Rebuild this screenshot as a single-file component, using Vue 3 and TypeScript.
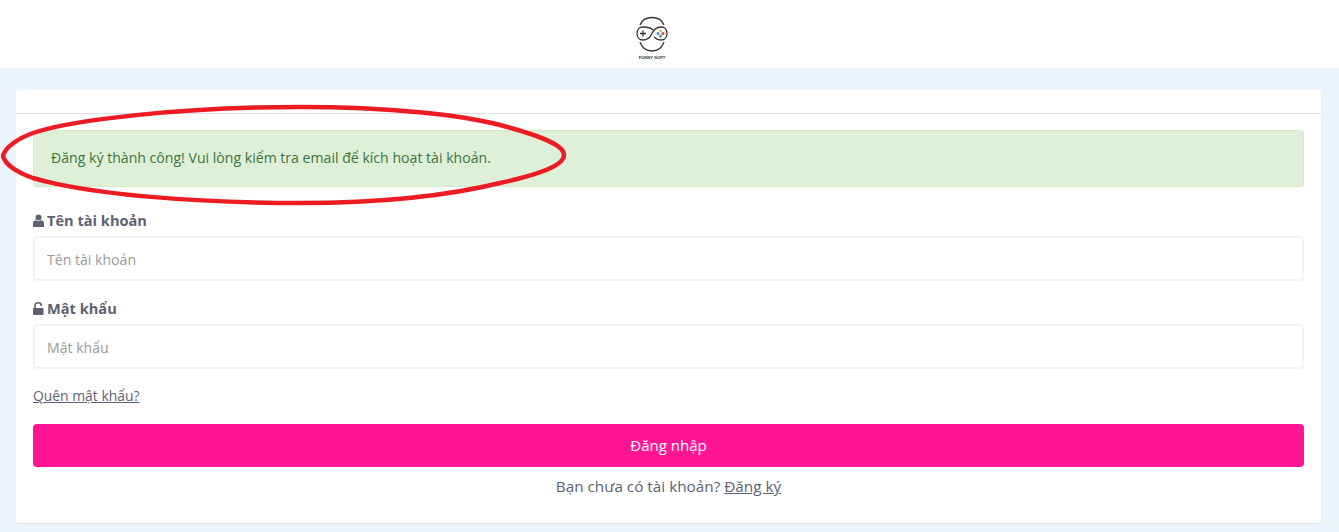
<template>
  <div class="page">
    <header class="top">
      <svg class="logo" width="36" height="46" viewBox="0 0 36 46" fill="none">
        <path d="M6 11 C10 1 26 1 30 11" stroke="#333" stroke-width="1.300" />
        <path d="M6 28 C10 40 26 40 30 28" stroke="#333" stroke-width="1.300" />
        <path d="M19 16 C17 14 14 13 9 13 C5 13 3 16 3 19.500 C3 23 5 26 9 26 C13 26 16 24 18 19.500 C20 15 23 13 27 13 C31 13 33 16 33 19.500 C33 23 31 26 27 26 C24 26 22 25 20 23" stroke="#333" stroke-width="1.300" />
        <path d="M6 19.500 H12 M9 16.500 V22.500" stroke="#333" stroke-width="1.300" />
        <circle cx="26.500" cy="17" r="1.500" fill="#e8b730" />
        <circle cx="24" cy="19.500" r="1.500" fill="#3f8fd8" />
        <circle cx="29" cy="19.500" r="1.500" fill="#d8453f" />
        <circle cx="26.500" cy="22" r="1.500" fill="#4dab55" />
        <text x="18" y="45" class="logo-text" text-anchor="middle">FUNNY SOFT</text>
      </svg>
    </header>

    <main class="content">
      <section class="card">
        <div class="card-head"></div>
        <form class="card-body" @submit.prevent>
          <div class="alert">Đăng ký thành công! Vui lòng kiểm tra email để kích hoạt tài khoản.</div>

          <div class="field">
            <label class="label">
              <svg class="ico" width="11" height="13" viewBox="0 0 11 13">
                <circle cx="5.500" cy="3.400" r="3" fill="#5c6273" />
                <path d="M0 13 V9.500 C0 7.500 1.500 6.300 3 6.300 C4.500 7.500 6.500 7.500 8 6.300 C9.500 6.300 11 7.500 11 9.500 V13 Z" fill="#5c6273" />
              </svg>
              Tên tài khoản
            </label>
            <input class="input" type="text" placeholder="Tên tài khoản" />
          </div>

          <div class="field">
            <label class="label">
              <svg class="ico" width="11" height="13" viewBox="0 0 11 13">
                <path d="M2 6 V3.600 C2 1.800 3.400 0.800 5.200 0.800 C7 0.800 8.300 1.800 8.300 3.400 V4" fill="none" stroke="#5c6273" stroke-width="1.600" />
                <rect x="0" y="6" width="10.500" height="7" rx="1" fill="#5c6273" />
              </svg>
              Mật khẩu
            </label>
            <input class="input" type="password" placeholder="Mật khẩu" />
          </div>

          <a class="forgot" href="#">Quên mật khẩu?</a>

          <button class="submit" type="submit">Đăng nhập</button>

          <p class="signup">Bạn chưa có tài khoản? <a href="#">Đăng ký</a></p>
        </form>
      </section>
    </main>

    <svg class="circle-mark" width="570" height="104" viewBox="0 0 570 104" fill="none">
      <path d="M2 53 C4 44 18 35 32 30 C70 17 180 4 299 4 C390 4 460 12 499 22 C540 33 563 42 563 52 C563 62 540 71 499 80 C450 92 380 100 299 100 C200 100 90 92 32 75 C18 70 4 62 2 53 Z" stroke="#ed1c24" stroke-width="4.500" />
    </svg>
  </div>
</template>

<script setup lang="ts">
</script>

<style>
html,
body {
  margin: 0;
  background: #ebf3fc;
}
</style>

<style scoped>
.page {
  position: relative;
  height: 532px;
  overflow: hidden;
  background: #ebf3fc;
  font-family: "Open Sans", "Liberation Sans", sans-serif;
  font-size: 14.100px;
  line-height: 22px;
  color: #5c6273;
}

.top {
  height: 68px;
  background: #fff;
  display: flex;
  justify-content: center;
  align-items: flex-start;
  padding-top: 14px;
  padding-right: 35px;
  box-sizing: border-box;
}

.logo-text {
  font-family: "Liberation Sans", sans-serif;
  font-size: 4.200px;
  font-weight: 700;
  fill: #333;
}

.content {
  padding: 22px 18px 0 16px;
}

.card {
  background: #fff;
  border-radius: 4px;
  box-shadow: 0 1px 1px rgba(90, 110, 140, 0.12);
  height: 433px;
}

.card-head {
  height: 23px;
  border-bottom: 1px solid #dcdfe4;
}

.card-body {
  padding: 16px 17px 0;
}

.alert {
  height: 57px;
  box-sizing: border-box;
  padding: 16px 17px;
  background: #dff0d8;
  border: 1px solid #d6e9c6;
  border-radius: 3px;
  color: #3c763d;
}

.field {
  margin-top: 23px;
}

.field + .field {
  margin-top: 17px;
}

.label {
  display: flex;
  align-items: center;
  gap: 3px;
  height: 23px;
  box-sizing: border-box;
  padding-bottom: 3px;
  font-size: 14.600px;
  font-weight: 700;
  margin-bottom: 3px;
}

.ico {
  display: block;
  flex: none;
}

.input {
  display: block;
  width: 100%;
  height: 45px;
  box-sizing: border-box;
  padding: 2px 12px 0;
  border: 2px solid #f1f2f4;
  border-radius: 4px;
  background: #fff;
  font: inherit;
  color: #5c6273;
  outline: none;
}

.input::placeholder {
  color: #9a9a9a;
  opacity: 1;
}

.forgot {
  display: block;
  width: max-content;
  margin-top: 16px;
  color: #5c6273;
  font-size: 13.900px;
}

.submit {
  display: block;
  width: 100%;
  height: 43px;
  margin-top: 17px;
  padding: 0 0 2px;
  border: 0;
  border-radius: 4px;
  background: #ff1493;
  color: #fff;
  font: inherit;
  font-size: 15px;
}

.signup {
  margin: 8px 0 0;
  text-align: center;
  font-size: 15.300px;
}

.signup a {
  color: #5c6273;
}

.circle-mark {
  position: absolute;
  left: 1px;
  top: 103px;
}
</style>
